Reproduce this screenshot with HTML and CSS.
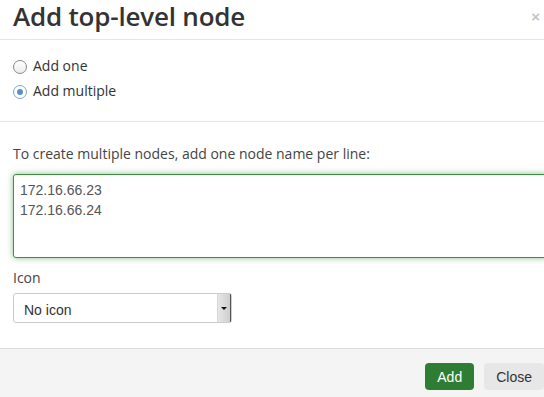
FILE: index.html
```html
<!DOCTYPE html>
<html lang="en">
<head>
  <meta charset="UTF-8">
  <title>Add top-level node</title>
  <link rel="stylesheet" href="styles.css">
</head>
<body>
  <div class="modal">
    <div class="modal-header">
      <h3>Add top-level node</h3>
      <span class="close-x">&times;</span>
    </div>
    <div class="modal-body">
      <div class="choices">
        <label class="radio"><input type="radio" name="mode"> Add one</label>
        <label class="radio"><input type="radio" name="mode" checked> Add multiple</label>
      </div>
      <hr>
      <label class="field-label" for="names">To create multiple nodes, add one node name per line:</label>
      <textarea id="names" class="names">172.16.66.23
172.16.66.24</textarea>
      <label class="field-label icon-label">Icon</label>
      <div class="select">
        <span class="select-text">No icon</span>
        <span class="select-btn"><span class="caret"></span></span>
      </div>
    </div>
    <div class="modal-footer">
      <button class="btn btn-add">Add</button>
      <button class="btn btn-close">Close</button>
    </div>
  </div>
</body>
</html>
```
FILE: styles.css
```css
body {
  margin: 0;
  background: #fff;
  overflow: hidden;
  font-family: 'Open Sans', sans-serif;
  color: #333;
}

.modal {
  width: 560px;
}

.modal-header {
  height: 40px;
  box-sizing: border-box;
  border-bottom: 1px solid #e5e5e5;
  display: flex;
  align-items: flex-start;
  justify-content: space-between;
  padding: 2px 20px 0 13px;
}

.modal-header h3 {
  margin: 0;
  font-size: 26px;
  font-weight: 600;
  color: #333;
  line-height: 28px;
  letter-spacing: -0.2px;
}

.close-x {
  font-family: 'Liberation Sans', sans-serif;
  font-size: 15px;
  font-weight: bold;
  color: #c4c4c4;
  line-height: 20px;
  margin-top: 5px;
}

.modal-body {
  padding: 0 13px;
}

.choices {
  padding: 13px 0 18px;
}

.radio {
  display: flex;
  align-items: center;
  font-size: 14px;
  height: 25px;
  color: #333;
}

.radio input {
  appearance: none;
  -webkit-appearance: none;
  box-sizing: border-box;
  margin: 3px 6px 0 0;
  width: 14px;
  height: 14px;
  border: 1px solid #8a8a8a;
  border-radius: 50%;
  background: linear-gradient(#fff, #ececec);
  position: relative;
}

.radio input:checked {
  border-color: #7fa7d0;
  background: #fff;
}

.radio input:checked::after {
  content: "";
  position: absolute;
  left: 3px;
  top: 3px;
  width: 6px;
  height: 6px;
  border-radius: 50%;
  background: #5b8fc7;
}

hr {
  border: 0;
  border-top: 1px solid #e5e5e5;
  margin: 0 -13px;
}

.field-label {
  display: block;
  font-size: 14px;
  color: #444;
  margin-top: 22px;
  line-height: 20px;
}

.names {
  display: block;
  box-sizing: border-box;
  width: 100%;
  height: 84px;
  margin-top: 10px;
  padding: 5px 6px;
  border: 1px solid #3f8f42;
  border-radius: 3px;
  box-shadow: 0 0 6px rgba(60, 150, 60, 0.6);
  font-family: 'Liberation Sans', sans-serif;
  font-size: 14px;
  line-height: 20px;
  color: #555;
  resize: none;
  outline: none;
}

.icon-label {
  margin-top: 10px;
}

.select {
  margin-top: 5px;
  width: 219px;
  height: 30px;
  box-sizing: border-box;
  border: 1px solid #ccc;
  border-radius: 3px;
  display: flex;
  align-items: stretch;
  font-family: 'Liberation Sans', sans-serif;
  font-size: 14px;
  color: #333;
}

.select-text {
  flex: 1;
  padding: 8px 10px 0;
}

.select-btn {
  width: 12px;
  background: linear-gradient(to right, #e6e6e6, #cfcfcf);
  border-left: 1px solid #d8d8d8;
  border-right: 1px solid #555;
  display: flex;
  align-items: center;
  justify-content: center;
}

.caret {
  width: 0;
  height: 0;
  border-left: 3px solid transparent;
  border-right: 3px solid transparent;
  border-top: 3px solid #111;
}

.modal-footer {
  margin-top: 25px;
  border-top: 1px solid #ddd;
  background: #f4f4f4;
  height: 50px;
  box-sizing: border-box;
  display: flex;
  justify-content: flex-end;
  align-items: flex-start;
  padding: 14px 16px 0 0;
  gap: 10px;
}

.btn {
  font-family: 'Liberation Sans', sans-serif;
  font-size: 14px;
  border: 0;
  border-radius: 4px;
  height: 27px;
  padding: 0 12px;
}

.btn-add {
  background: #2f7d32;
  color: #fff;
}

.btn-close {
  background: #e7e7e7;
  color: #333;
}
```
